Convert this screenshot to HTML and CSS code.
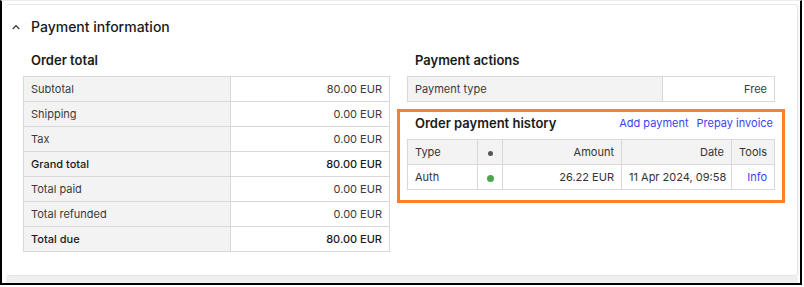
FILE: index.html
```html
<!DOCTYPE html>
<html lang="en">
<head>
<meta charset="utf-8">
<title>Payment information</title>
<link rel="stylesheet" href="styles.css">
</head>
<body>
<div class="frame">
  <div class="card">
    <div class="card-header">
      <svg class="chevron" width="8" height="6" viewBox="0 0 8 6" aria-hidden="true"><path d="M0.8 5 L4 1.6 L7.2 5" fill="none" stroke="#333" stroke-width="1.2"/></svg>
      <h2 class="card-title">Payment information</h2>
    </div>
    <div class="card-body">
      <section class="col">
        <h3 class="section-title">Order total</h3>
        <table class="kv kv-totals">
          <tr><td class="k">Subtotal</td><td class="v">80.00 EUR</td></tr>
          <tr><td class="k">Shipping</td><td class="v">0.00 EUR</td></tr>
          <tr><td class="k">Tax</td><td class="v">0.00 EUR</td></tr>
          <tr class="strong"><td class="k">Grand total</td><td class="v">80.00 EUR</td></tr>
          <tr><td class="k">Total paid</td><td class="v">0.00 EUR</td></tr>
          <tr><td class="k">Total refunded</td><td class="v">0.00 EUR</td></tr>
          <tr class="strong"><td class="k">Total due</td><td class="v">80.00 EUR</td></tr>
        </table>
      </section>
      <section class="col">
        <h3 class="section-title">Payment actions</h3>
        <table class="kv kv-actions">
          <tr><td class="k">Payment type</td><td class="v">Free</td></tr>
        </table>
        <div class="history">
          <div class="history-head">
            <h3 class="section-title">Order payment history</h3>
            <div class="links">
              <a href="#" class="link">Add payment</a>
              <a href="#" class="link">Prepay invoice</a>
            </div>
          </div>
          <table class="grid">
            <thead>
              <tr>
                <th class="c-type">Type</th>
                <th class="c-dot"><span class="dot dot-head"></span></th>
                <th class="c-amount">Amount</th>
                <th class="c-date">Date</th>
                <th class="c-tools">Tools</th>
              </tr>
            </thead>
            <tbody>
              <tr>
                <td class="c-type">Auth</td>
                <td class="c-dot"><span class="dot dot-ok"></span></td>
                <td class="c-amount">26.22 EUR</td>
                <td class="c-date">11 Apr 2024, 09:58</td>
                <td class="c-tools"><a href="#" class="link">Info</a></td>
              </tr>
            </tbody>
          </table>
        </div>
      </section>
    </div>
  </div>
  <div class="next-card"></div>
</div>
</body>
</html>
```
FILE: styles.css
```css
* { box-sizing: border-box; }
html, body { margin: 0; padding: 0; background: #fff; }
body {
  font-family: Inter, "Noto Sans", "Liberation Sans", sans-serif;
  color: #222;
  width: 804px;
  height: 287px;
  overflow: hidden;
}
.frame {
  width: 802px;
  height: 285px;
  border-left: 2px solid #000;
  border-right: 2px solid #000;
  border-bottom: 2px solid #000;
  border-top: 1px solid #ededed;
  padding: 3px 2px 0 4px;
  background: #fff;
  overflow: hidden;
}
.card {
  width: 792px;
  height: 272px;
  background: #fff;
  border-top: 1px solid #e6e6e6;
  border-right: 1px solid #e9e9e9;
  border-bottom: 1px solid #e6e6e6;
  border-radius: 4px;
  box-shadow: 1px 1px 2px rgba(0,0,0,0.06);
  padding: 12px 23px 0 6px;
}
.card-header {
  display: flex;
  align-items: center;
  height: 20px;
}
.chevron { margin: 0 0 1px 0; flex: none; }
.card-title {
  margin: 0 0 0 11px;
  font-size: 14px;
  font-weight: 500;
  color: #1a1a1a;
  line-height: 20px;
}
.card-body {
  display: flex;
  gap: 17px;
  margin-top: 13px;
  padding-left: 11px;
}
.col { width: 367px; flex: none; }
.col + .col { width: 368px; }
.section-title {
  margin: 0 0 6px 8px;
  font-size: 13px;
  font-weight: 600;
  color: #1a1a1a;
  line-height: 20px;
}
table { border-collapse: collapse; font-size: 11px; }
.kv { width: 100%; }
.kv td {
  border: 1px solid #d8d8d8;
  height: 25px;
  padding: 0 7px 0 7px;
  color: #3a3a3a;
  white-space: nowrap;
}
.kv td.k { background: #f3f3f3; }
.kv td.v { background: #fff; text-align: right; }
.kv-totals td.k { width: 207px; }
.kv-actions td.k { width: 255px; }
.kv tr.strong td { color: #1a1a1a; font-weight: 500; }

.history {
  margin: 7px -10px 0 -10px;
  border: 3px solid #fd8128;
  padding: 0 8px 10px 7px;
}
.history-head {
  display: flex;
  align-items: center;
  justify-content: space-between;
  height: 21px;
  margin-bottom: 6px;
}
.history-head .section-title { margin: 0 0 0 8px; }
.links { display: flex; gap: 8px; font-size: 11px; padding-right: 1px; }
.link { color: #3d3ff2; text-decoration: none; }

.grid { width: 367px; table-layout: fixed; }
.grid th, .grid td {
  border: 1px solid #d8d8d8;
  height: 25px;
  padding: 0 7px 0 7px;
  font-weight: normal;
  color: #333;
  white-space: nowrap;
}
.grid th { background: #f3f3f3; }
.grid td { background: #fff; }
.grid .c-type { width: 70px; text-align: left; }
.grid .c-dot { width: 25px; text-align: center; padding: 0; }
.grid .c-amount { width: 119px; text-align: right; }
.grid .c-date { width: 110px; text-align: right; }
.grid .c-tools { width: 43px; text-align: right; }
.dot { display: inline-block; border-radius: 50%; vertical-align: middle; }
.dot-head { width: 5px; height: 5px; background: #555; }
.dot-ok { width: 7px; height: 7px; background: #4aa64a; }

.next-card {
  height: 10px;
  width: 792px;
  background: #efefef;
  border-radius: 3px 3px 0 0;
}
```
